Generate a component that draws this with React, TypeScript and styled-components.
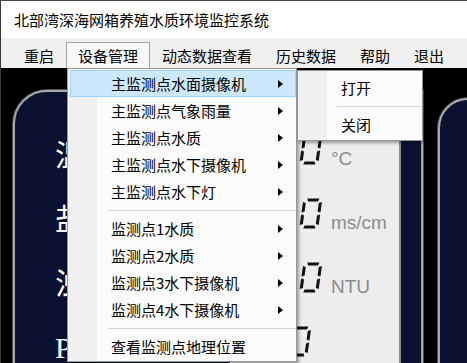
import React from "react";
import styled, { createGlobalStyle } from "styled-components";

const GlobalStyle = createGlobalStyle`
  html, body { margin: 0; padding: 0; background: #fff; overflow: hidden; }
  body { font-family: "Noto Sans CJK SC", "Noto Sans", sans-serif; }
`;

const Window = styled.div`
  position: relative;
  width: 467px;
  height: 363px;
  box-sizing: border-box;
  border-top: 1px solid #4a4a4a;
  border-left: 1px solid #3a3a3a;
  display: flex;
  flex-direction: column;
  overflow: hidden;
  font-family: "Noto Sans CJK SC", sans-serif;
  color: #000;
`;

const TitleBar = styled.div`
  height: 37px;
  flex: none;
  background: #fff;
  display: flex;
  align-items: center;
  padding-left: 13px;
  font-size: 15px;
  line-height: 1;
`;

const MenuBar = styled.div`
  height: 30px;
  flex: none;
  background: #f0f0f0;
  display: flex;
  align-items: flex-end;
  padding-left: 11px;
`;

const MenuBarItem = styled.div<{ $open?: boolean }>`
  height: 26px;
  line-height: 26px;
  box-sizing: border-box;
  padding: 0 11px;
  font-size: 15px;
  border: 1px solid ${(p) => (p.$open ? "#a6a6a6" : "transparent")};
  border-bottom: none;
  background: ${(p) => (p.$open ? "#f8f8f8" : "transparent")};
`;

const Content = styled.div`
  flex: 1;
  min-height: 0;
  background: #000;
  display: flex;
  align-items: flex-start;
  padding: 22px 0 0 12px;
  overflow: hidden;
`;

const Panel = styled.div<{ $width: number; $top: number; $radius: number }>`
  flex: none;
  width: ${(p) => p.$width}px;
  height: 300px;
  margin-top: ${(p) => p.$top}px;
  box-sizing: border-box;
  background: #0b1231;
  border: 2px solid #a9a9a9;
  border-top-left-radius: ${(p) => p.$radius}px;
  box-shadow: 0 0 0 1px #505050;
  display: flex;
  padding-right: 20px;
`;

const RightPanel = styled(Panel)`
  margin-left: 15px;
`;

const Labels = styled.div`
  flex: 1;
  padding: 29px 0 0 40px;
  display: flex;
  flex-direction: column;
`;

const Label = styled.div`
  height: 64px;
  display: flex;
  align-items: center;
  color: #fff;
  font-family: "Liberation Serif", "Noto Sans CJK SC", serif;
  font-size: 30px;
  white-space: nowrap;
`;

const ReadoutBox = styled.div`
  flex: none;
  width: 171px;
  height: 300px;
  margin-top: 8px;
  box-sizing: border-box;
  background: #ededed;
  border-right: 2px solid #8a8a8a;
  padding: 17px 0 0 68px;
  display: flex;
  flex-direction: column;
`;

const ReadoutRow = styled.div`
  height: 64px;
  display: flex;
  align-items: center;
  gap: 9px;
`;

const DigitWrap = styled.div<{ $shift?: number }>`
  width: 24px;
  height: 31px;
  margin-left: ${(p) => p.$shift || 0}px;
  display: flex;
`;

const Unit = styled.div`
  font-family: "Liberation Sans", Arial, sans-serif;
  font-size: 19px;
  color: #8c8c8c;
  padding-top: 18px;
  line-height: 1;
  white-space: nowrap;
`;

const Dropdown = styled.div<{ $left: number; $top: number; $width: number }>`
  position: absolute;
  left: ${(p) => p.$left}px;
  top: ${(p) => p.$top}px;
  width: ${(p) => p.$width}px;
  box-sizing: border-box;
  border: 1px solid #979797;
  background: linear-gradient(to right, #f0f0f0 29px, #fbfbfb 29px);
  box-shadow: 2px 2px 3px rgba(0, 0, 0, 0.35);
  display: flex;
  flex-direction: column;
`;

const MainMenu = styled(Dropdown)`
  padding: 1px 0 1px 0;
`;

const SubMenu = styled(Dropdown)`
  padding: 3px 0 2px 0;
`;

const DropItem = styled.div<{ $active?: boolean; $indent: number }>`
  height: 27px;
  margin-left: ${(p) => p.$indent}px;
  box-sizing: border-box;
  padding: 0 12px 0 ${(p) => 42 - p.$indent}px;
  display: flex;
  align-items: center;
  justify-content: space-between;
  font-size: 15px;
  line-height: 1;
  white-space: nowrap;
  border: 1px solid ${(p) => (p.$active ? "#99d1ff" : "transparent")};
  background: ${(p) => (p.$active ? "#cce8ff" : "transparent")};
`;

const MenuSeparator = styled.div<{ $inset: number }>`
  height: 10px;
  display: flex;
  align-items: center;
  margin-left: ${(p) => p.$inset}px;
  &::after {
    content: "";
    flex: 1;
    border-top: 1px solid #d5d5d5;
  }
`;

const Arrow = () => (
  <svg width="5" height="8" viewBox="0 0 5 8">
    <polygon points="0,0 5,4 0,8" fill="#000" />
  </svg>
);

const SegDigit = () => (
  <svg width="24" height="31" viewBox="0 0 24 31">
    <g transform="skewX(-8) translate(4.5 0)" fill="#111">
      <polygon points="5,0.5 17,0.5 16,3.5 6,3.5" />
      <polygon points="1,4 4,5 4,13.5 1,14.5" />
      <polygon points="20,4 17,5 17,13.5 20,14.5" />
      <polygon points="1,16.5 4,17.5 4,26 1,27" />
      <polygon points="20,16.5 17,17.5 17,26 20,27" />
      <polygon points="6,27.5 16,27.5 17,30.5 5,30.5" />
    </g>
  </svg>
);

type Entry = { kind: "item"; text: string; sub?: boolean; active?: boolean } | { kind: "sep" };

const mainItems: Entry[] = [
  { kind: "item", text: "主监测点水面摄像机", sub: true, active: true },
  { kind: "item", text: "主监测点气象雨量", sub: true },
  { kind: "item", text: "主监测点水质", sub: true },
  { kind: "item", text: "主监测点水下摄像机", sub: true },
  { kind: "item", text: "主监测点水下灯", sub: true },
  { kind: "sep" },
  { kind: "item", text: "监测点1水质", sub: true },
  { kind: "item", text: "监测点2水质", sub: true },
  { kind: "item", text: "监测点3水下摄像机", sub: true },
  { kind: "item", text: "监测点4水下摄像机", sub: true },
  { kind: "sep" },
  { kind: "item", text: "查看监测点地理位置" },
];

const subItems: Entry[] = [
  { kind: "item", text: "打开" },
  { kind: "sep" },
  { kind: "item", text: "关闭" },
];

const menuBar = ["重启", "设备管理", "动态数据查看", "历史数据", "帮助", "退出"];

const readouts = [
  { unit: "°C", shift: 0 },
  { unit: "ms/cm", shift: 0 },
  { unit: "NTU", shift: 0 },
  { unit: "", shift: -11 },
];

const labels = ["温度：", "盐度：", "浊度：", "PH："];

function renderEntries(entries: Entry[], indent: number, sepInset: number) {
  return entries.map((e, i) =>
    e.kind === "sep" ? (
      <MenuSeparator key={i} $inset={sepInset} />
    ) : (
      <DropItem key={i} $active={e.active} $indent={indent}>
        <span>{e.text}</span>
        {e.sub ? <Arrow /> : null}
      </DropItem>
    )
  );
}

export default function App() {
  return (
    <>
      <GlobalStyle />
      <Window>
        <TitleBar>北部湾深海网箱养殖水质环境监控系统</TitleBar>
        <MenuBar>
          {menuBar.map((m) => (
            <MenuBarItem key={m} $open={m === "设备管理"}>
              {m}
            </MenuBarItem>
          ))}
        </MenuBar>
        <Content>
          <Panel $width={410} $top={0} $radius={34}>
            <Labels>
              {labels.map((l) => (
                <Label key={l}>{l}</Label>
              ))}
            </Labels>
            <ReadoutBox>
              {readouts.map((r, i) => (
                <ReadoutRow key={i}>
                  <DigitWrap $shift={r.shift}>
                    <SegDigit />
                  </DigitWrap>
                  <Unit>{r.unit}</Unit>
                </ReadoutRow>
              ))}
            </ReadoutBox>
          </Panel>
          <RightPanel $width={80} $top={8} $radius={30} />
        </Content>
        <MainMenu $left={66} $top={67} $width={230}>
          {renderEntries(mainItems, 2, 40)}
        </MainMenu>
        <SubMenu $left={296} $top={69} $width={126}>
          {renderEntries(subItems, 0, 39)}
        </SubMenu>
      </Window>
    </>
  );
}
